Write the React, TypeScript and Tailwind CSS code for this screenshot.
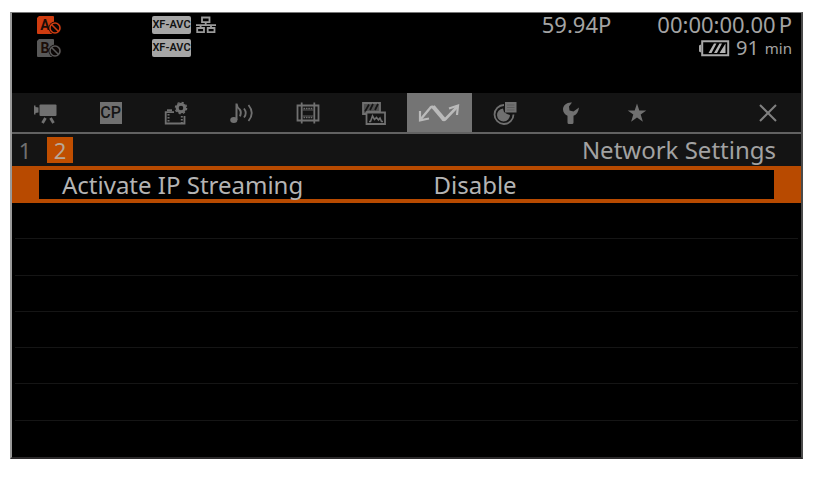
import type { ReactNode } from 'react';

const FONT = "font-['Noto_Sans','Open_Sans',sans-serif]";
const LABEL_FONT = "font-['Roboto','Liberation_Sans',sans-serif]";

const EMPTY_ROWS = [1, 2, 3, 4, 5, 6, 7];

function CardSlot({ letter, className }: { letter: string; className: string }) {
  return (
    <svg width="25" height="20" viewBox="0 0 25 20" className={className} role="img" aria-label={`Card ${letter}`}>
      <path d="M2 1h14q1 0 1 1v16q0 1-1 1H1q-1 0-1-1V3z" fill="currentColor" />
      <text x="8" y="15" textAnchor="middle" fontSize="14" fontWeight="700" fill="#1c0d08" className={LABEL_FONT}>
        {letter}
      </text>
      <circle cx="18" cy="13" r="6.5" fill="#0a0504" />
      <circle cx="18" cy="13" r="5" fill="none" stroke="currentColor" strokeWidth="1.6" />
      <path d="M14.500 9.500l7 7" stroke="currentColor" strokeWidth="1.6" />
    </svg>
  );
}

function FormatBadge() {
  return (
    <span
      className={`flex h-[18px] w-[39px] items-center justify-center rounded-xs bg-[#a6a6a6] text-[11px] leading-[18px] font-semibold whitespace-nowrap text-[#111] ${LABEL_FONT}`}
    >
      XF-AVC
    </span>
  );
}

function LanIcon() {
  return (
    <svg width="20" height="18" viewBox="0 0 20 18" fill="none" stroke="#9a9a9a" strokeWidth="1.8" role="img" aria-label="Network">
      <path d="M6 1.500h7.500v4.700H6zM9.700 6v3M0 9.200h20M4.600 9v3M15 9v3M1.200 12h6.800v4.200H1.200zM11.700 12h6.800v4.200h-6.800z" />
    </svg>
  );
}

function BatteryIcon() {
  return (
    <svg width="31" height="17" viewBox="0 0 31 17" role="img" aria-label="Battery">
      <path d="M0 5.500l2-1v8l-2-1z" fill="#a8a8a8" />
      <path d="M3.200 1.200h26v14h-26z" fill="none" stroke="#a8a8a8" strokeWidth="2" />
      <path d="M9.500 13l5.500-9.500h2.500L12.500 13zM15 13l5.500-9.500H23L18 13zM20.500 13l6-9.500V13z" fill="#b4b4b4" />
    </svg>
  );
}

function TabSvg({ children }: { children: ReactNode }) {
  return (
    <svg width="24" height="24" viewBox="0 0 24 24" fill="none" stroke="currentColor" strokeWidth="1.6" aria-hidden="true">
      {children}
    </svg>
  );
}

const TABS: { name: string; icon: ReactNode }[] = [
  {
    name: 'Camera Setup',
    icon: (
      <TabSvg>
        <path d="M1 4.500h1.500V6l3 .5v5l-3 .5v1.500H1z" fill="currentColor" stroke="none" />
        <rect x="6.500" y="3.500" width="17" height="11.500" rx="1" fill="currentColor" stroke="none" />
        <path d="M12.500 17l-3 5M17.500 17l3 5" strokeWidth="2.800" />
      </TabSvg>
    ),
  },
  {
    name: 'Custom Picture',
    icon: (
      <span
        className={`flex h-[22px] w-[22px] items-center justify-center bg-[#707070] text-[16px] leading-[22px] font-medium text-[#151515] ${LABEL_FONT}`}
      >
        CP
      </span>
    ),
  },
  {
    name: 'Recording/Media Setup',
    icon: (
      <TabSvg>
        <path d="M10 11.200H1.700V22.500H20.500V15" strokeWidth="1.800" />
        <path d="M3 9.300h5" strokeWidth="2" />
        <path d="M4.500 13v9M17.800 15v7" strokeWidth="2" strokeDasharray="1.500 1.500" />
        <circle cx="17" cy="7" r="3.800" strokeWidth="3" />
        <circle cx="17" cy="7" r="5.600" strokeWidth="1.400" strokeDasharray="2.200 2.198" />
      </TabSvg>
    ),
  },
  {
    name: 'Audio Setup',
    icon: (
      <TabSvg>
        <ellipse cx="3.800" cy="19" rx="3.600" ry="3" fill="currentColor" stroke="none" />
        <path d="M6.500 19V2.500q.5 4 3 5.800 2.300 2.400.5 7" strokeWidth="2" />
        <path d="M14 7.500q3.500 4.500 0 9" strokeWidth="1.800" />
        <path d="M18.500 4q6.500 8 0 16" strokeWidth="1.800" />
      </TabSvg>
    ),
  },
  {
    name: 'Frame Setup',
    icon: (
      <TabSvg>
        <path d="M1.500 4.500h21v15h-21z" strokeWidth="1.800" />
        <path d="M5.700 1.500v21M18.300 1.500v21" strokeWidth="1.800" />
        <path d="M7.500 7.500h9M7.500 16.500h9" strokeWidth="1.600" strokeDasharray="1.600 .8" />
        <path d="M6.500 9h11M6.500 15h11" strokeWidth=".8" />
      </TabSvg>
    ),
  },
  {
    name: 'Assistance Functions',
    icon: (
      <TabSvg>
        <path d="M1 2h17v9H5v2H1z" fill="#505050" strokeWidth="1.800" />
        <path d="M3 10.500l4-7M8 9l3-6M13 9l3-6" stroke="#141414" strokeWidth="1.700" />
        <path d="M4.500 11.500H23V23H4.500z" fill="#141414" strokeWidth="1.800" />
        <path d="M7 20.500h1.500l2-5.500 2 3.500 2-2 2 2.500 1.500-2 1.500 3.500H21" strokeWidth="1.600" />
      </TabSvg>
    ),
  },
  {
    name: 'Network Settings',
    icon: (
      <svg width="42" height="24" viewBox="0 0 42 24" fill="none" stroke="#bababa" aria-hidden="true">
        <path d="M2.500 18.500L12.500 6.500q2-1.800 4 .5" strokeWidth="2.400" />
        <path d="M15 5.500L26 18.500" strokeWidth="4.200" />
        <path d="M24.500 18q1.500 1.500 3 0L39.500 5.500" strokeWidth="2.600" />
        <path d="M2 10v9.300l9-1.800" strokeWidth="2.200" />
        <path d="M31 7.500l9-3-1 9.500" strokeWidth="2.200" />
      </svg>
    ),
  },
  {
    name: 'Monitoring Setup',
    icon: (
      <TabSvg>
        <path d="M11 4a9.500 9.500 0 1 0 9.500 9.500" strokeWidth="1.800" />
        <path d="M10 7.500a6.500 6.500 0 1 0 7 6.500l-3-1-3-2z" fill="currentColor" stroke="none" />
        <rect x="12" y="1" width="11.500" height="10.500" fill="currentColor" stroke="none" />
        <path d="M14 4h7.500M14 6.500h7.500M14 9h7.500" stroke="#5c5c5c" strokeWidth="1" />
      </TabSvg>
    ),
  },
  {
    name: 'System Setup',
    icon: (
      <TabSvg>
        <path
          d="M13 1.500C8 1 4 4 4 8.500c0 3 2 5.200 4.500 6.200v6.800q0 1.500 1.500 1.500h3q1.500 0 1.500-1.500v-6.800c3-1 5-3.700 5.500-8.200l-5.500 4-4-1-.5-4z"
          fill="currentColor"
          stroke="none"
        />
      </TabSvg>
    ),
  },
  {
    name: 'My Menu',
    icon: (
      <TabSvg>
        <path
          d="M12 2.500l2.300 7h7l-5.600 4.100 2.200 7.200L12 16.500l-5.900 4.300 2.200-7.200-5.600-4.100h7z"
          fill="currentColor"
          stroke="none"
        />
      </TabSvg>
    ),
  },
];

function StatusHeader() {
  return (
    <header className="flex min-h-20 justify-between pr-[9px] pl-[25px] text-[#a4a4a4]">
      <div className="grid grid-cols-[115px_auto] content-start items-center gap-y-[3px] pt-[2px]">
        <CardSlot letter="A" className="text-[#cf3c10]" />
        <div className="flex items-center gap-[5px]">
          <FormatBadge />
          <LanIcon />
        </div>
        <CardSlot letter="B" className="text-[#585858]" />
        <FormatBadge />
      </div>
      <div>
        <div className="flex justify-end text-[22px] leading-[23px]">
          <span>59.94P</span>
          <span className="ml-[46px]">00:00:00.00</span>
          <span className="ml-[3px]">P</span>
        </div>
        <div className="flex items-center justify-end text-[20px] leading-6">
          <BatteryIcon />
          <span className="ml-[6px]">91</span>
          <span className="ml-[6px] text-[15px]">min</span>
        </div>
      </div>
    </header>
  );
}

function TabBar() {
  return (
    <nav className="grid h-[41px] grid-cols-12 border-b-2 border-[#626262] bg-[#141414]">
      {TABS.map((tab) => (
        <button
          key={tab.name}
          type="button"
          aria-label={tab.name}
          className={`flex items-center justify-center ${
            tab.name === 'Network Settings' ? 'bg-[#747474]' : 'text-[#707070]'
          }`}
        >
          {tab.icon}
        </button>
      ))}
      <button type="button" aria-label="Close" className="col-start-12 flex items-center justify-center text-[#808080]">
        <TabSvg>
          <path d="M4 4l16 16M20 4L4 20" strokeWidth="2" />
        </TabSvg>
      </button>
    </nav>
  );
}

export default function App() {
  return (
    <div className={`bg-white pt-3 pr-4 pb-[18px] pl-[10px] ${FONT}`}>
      <main className="border-t border-r-2 border-b-2 border-l-2 border-t-[#777] border-r-[#4a4a4a] border-b-[#2c2a2b] border-l-[#999] bg-black">
        <StatusHeader />
        <TabBar />

        <div className="flex h-8 items-center justify-between bg-[#141414] pr-[25px] pl-[2px] text-[24px] leading-8">
          <div className="flex items-center gap-[11px]">
            <button type="button" className="w-[22px] text-center text-[22px] text-[#707070]">
              1
            </button>
            <button
              type="button"
              aria-current="page"
              className="h-[26px] w-[26px] bg-[#c04e00] text-center text-[22px] leading-[26px] text-[#b8a898]"
            >
              2
            </button>
          </div>
          <h1 className="text-[#a2a2a2]">Network Settings</h1>
        </div>

        <button type="button" className="block w-full bg-[#b84a00] px-[27px] py-1 text-left">
          <span className="grid grid-cols-[372fr_341fr] bg-black pl-[23px] text-[24px] leading-[29px] text-[#b4b4b4]">
            <span>Activate IP Streaming</span>
            <span>Disable</span>
          </span>
        </button>

        <ul className="grid min-h-[254px] auto-rows-fr">
          {EMPTY_ROWS.map((row) => (
            <li key={row} className="mx-[3px] border-b border-[#151515] last:border-b-0" />
          ))}
        </ul>
      </main>
    </div>
  );
}
